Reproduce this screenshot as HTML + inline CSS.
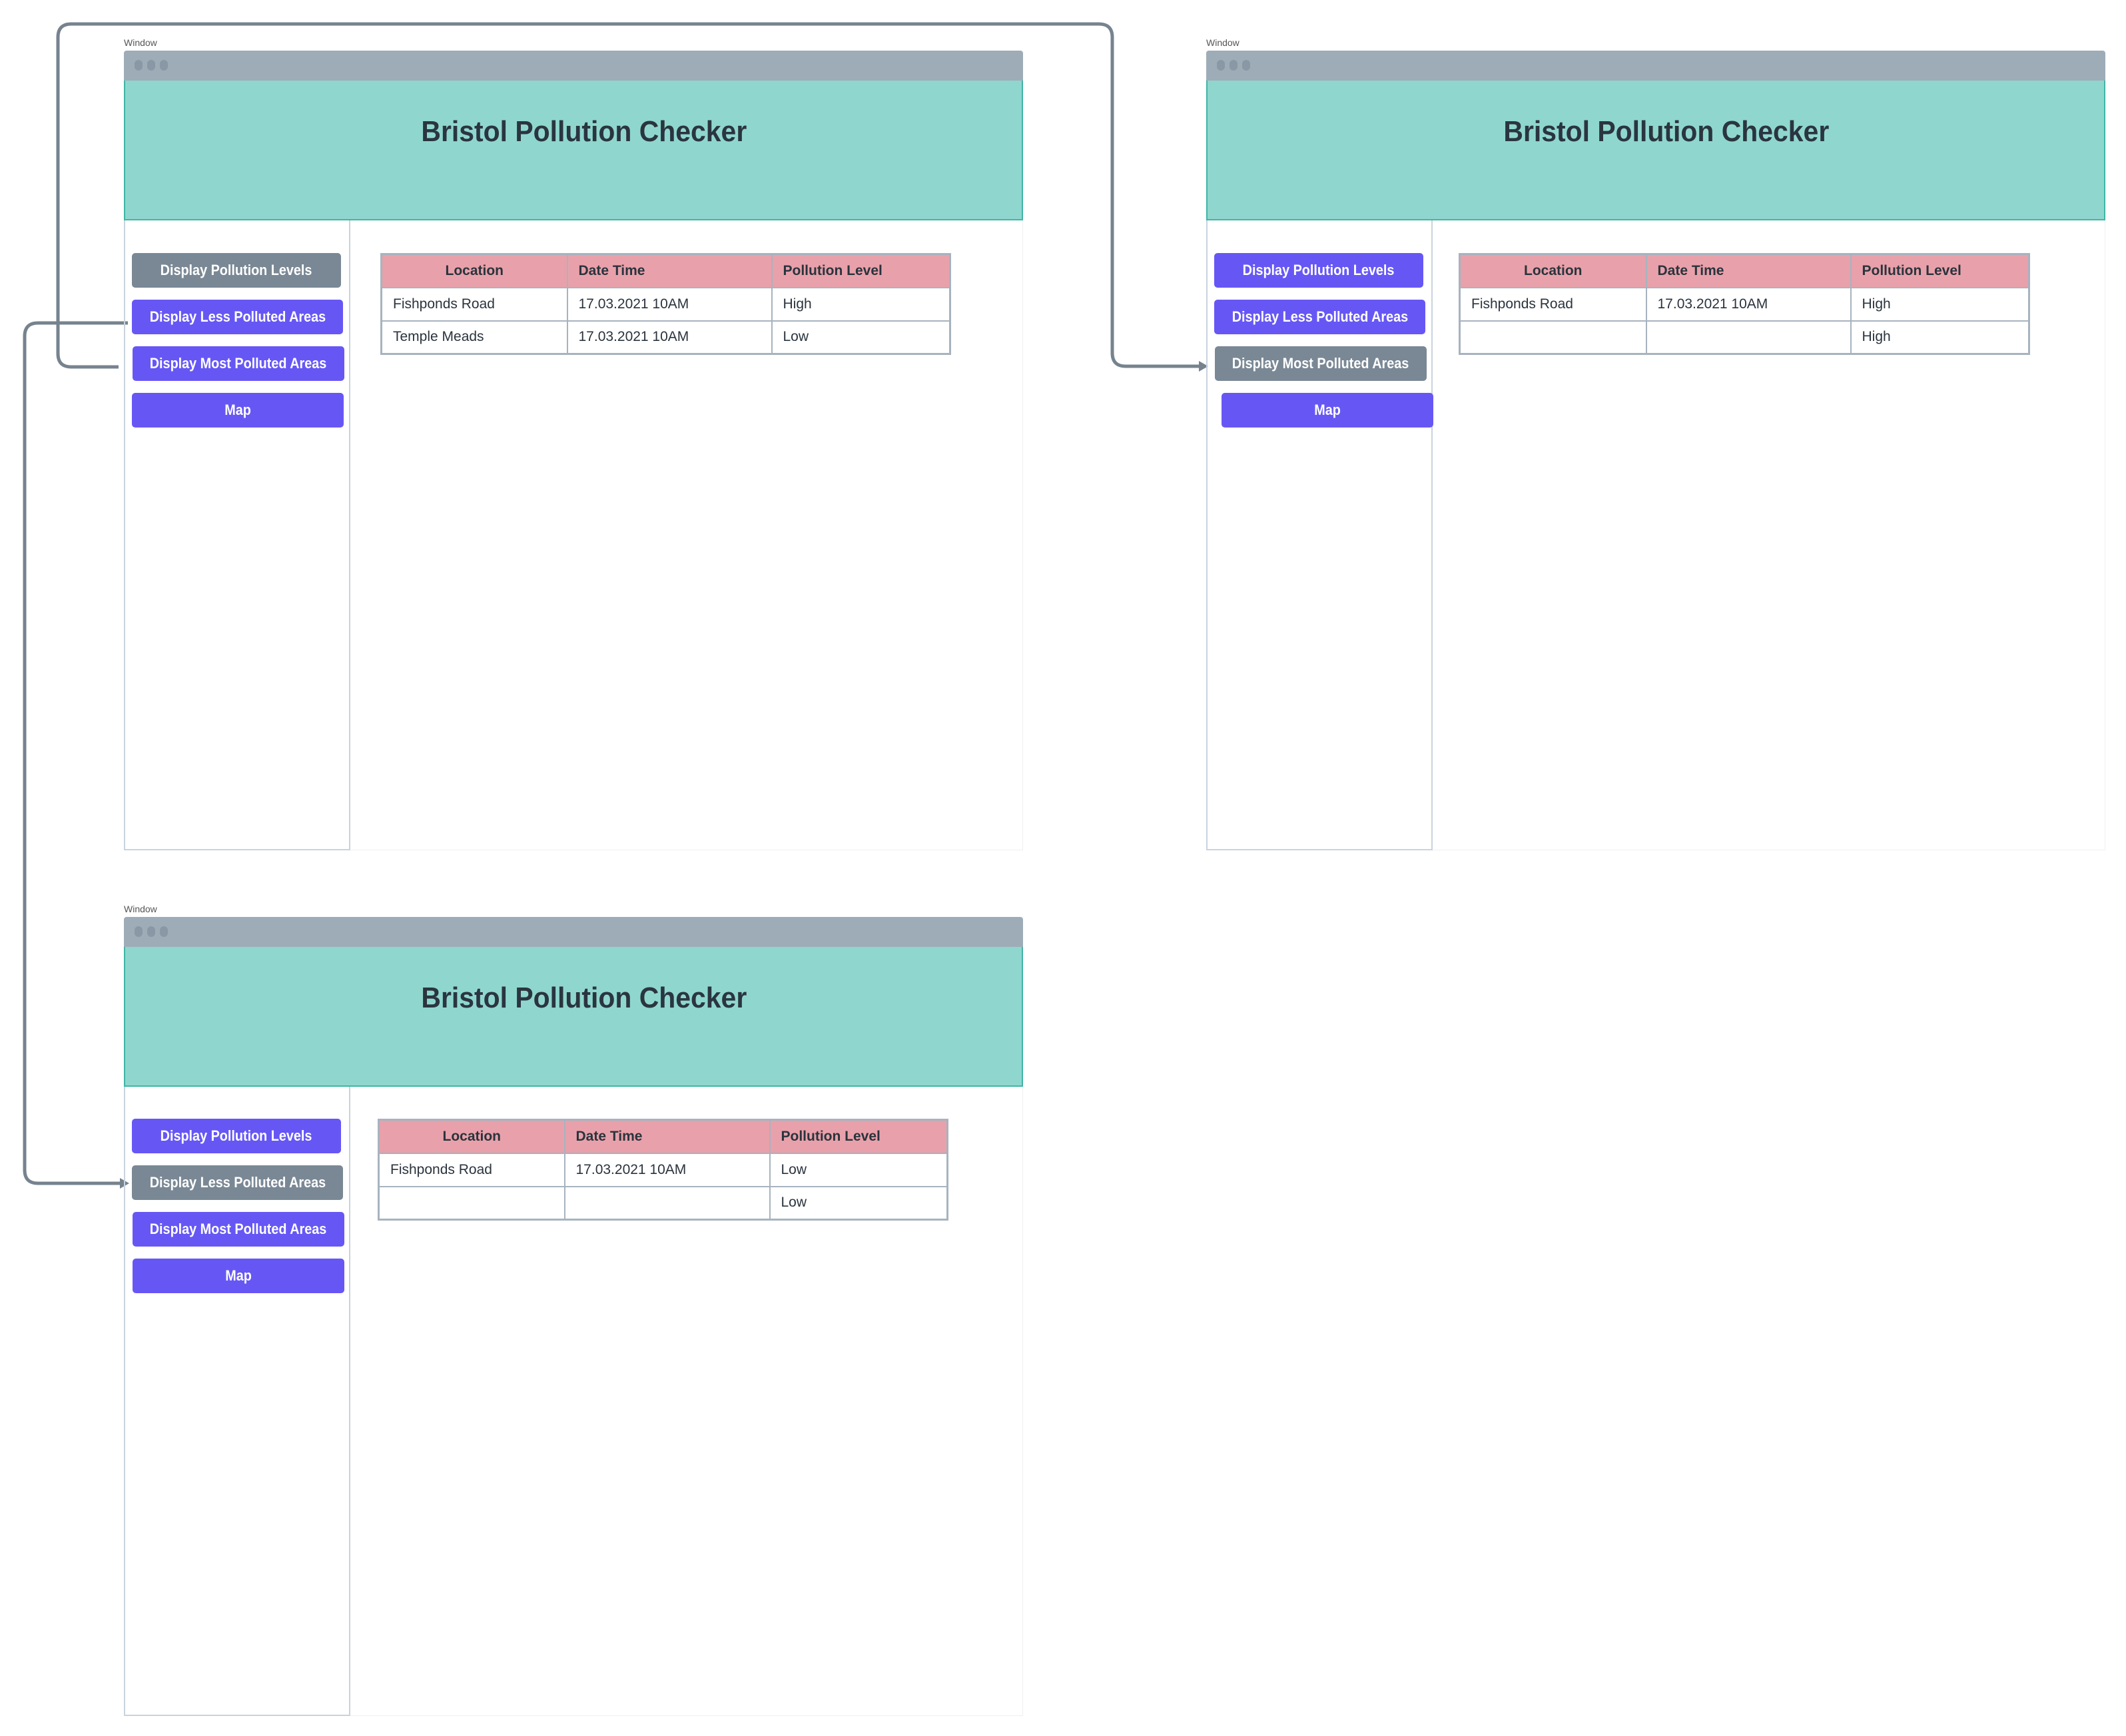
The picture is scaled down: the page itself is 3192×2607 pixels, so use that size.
<!DOCTYPE html>
<html><head><meta charset="utf-8"><style>
*{box-sizing:border-box;margin:0;padding:0}
body{width:3192px;height:2607px;background:#fff;position:relative;overflow:hidden;font-family:"Liberation Sans",sans-serif;color:#2a333d}
.win{position:absolute;width:1350px;height:1200px}
.lbl{position:absolute;left:0;top:-20px;font-size:14px;color:#555}
.bar{position:absolute;left:0;top:0;width:100%;height:46px;background:#9eacb8;border-radius:4px 4px 0 0}
.dot{position:absolute;top:14px;width:12px;height:16px;border-radius:6px;background:#8a97a4}
.hdr{position:absolute;left:0;top:45px;width:100%;height:210px;background:#8fd7ce;border:2px solid #3fb5a6;border-top:none}
.hdr h1{position:absolute;left:32px;right:0;top:52px;text-align:center;font-size:44px;font-weight:bold;color:#2a3540}
.hdr h1 span{display:inline-block;transform:scaleX(0.93)}
.side{position:absolute;left:0;top:255px;width:340px;bottom:0;border:2px solid #c9d3dd;border-top:none}
.main{position:absolute;left:340px;right:0;top:255px;bottom:0;border-right:1px solid #f0f0f0;border-bottom:1px solid #f0f0f0}
.btn{position:absolute;height:52px;border-radius:5px;background:#6657f5;color:#fff;font-size:22px;font-weight:bold;display:flex;align-items:center;justify-content:center;white-space:nowrap}
.btn span{display:inline-block;transform:scaleX(0.9)}
.btn.g{background:#7a8895}
table{position:absolute;border-collapse:collapse;font-size:21px;border:3px solid #a7b3bf}
td,th{border:2px solid #a7b3bf;height:50px;text-align:left;padding-left:16px}
th{background:#e8a1aa;font-weight:bold}
th:first-child{text-align:center;padding-left:0}
</style></head><body>

<svg style="position:absolute;left:0;top:0" width="3192" height="2607">
<path d="M178 551 H107 Q87 551 87 531 V56 Q87 36 107 36 H1650 Q1670 36 1670 56 V530 Q1670 550 1690 550 H1810" fill="none" stroke="#76838f" stroke-width="5"/>
<path d="M1800 542 L1814 550 L1800 558 Z" fill="#76838f"/>
<path d="M192 485 H57 Q37 485 37 505 V1757 Q37 1777 57 1777 H186" fill="none" stroke="#76838f" stroke-width="5"/>
<path d="M180 1769 L194 1777 L180 1785 Z" fill="#76838f"/>
</svg>

<!-- Window 1 -->
<div class="win" style="left:186px;top:76px;height:1201px">
<div class="lbl">Window</div>
<div class="bar"><div class="dot" style="left:16px"></div><div class="dot" style="left:35px"></div><div class="dot" style="left:54px"></div></div>
<div class="hdr"><h1><span>Bristol Pollution Checker</span></h1></div>
<div class="side"></div><div class="main"></div>
<div class="btn g" style="left:12px;top:304px;width:314px"><span>Display Pollution Levels</span></div>
<div class="btn" style="left:12px;top:374px;width:317px"><span>Display Less Polluted Areas</span></div>
<div class="btn" style="left:13px;top:444px;width:318px"><span>Display Most Polluted Areas</span></div>
<div class="btn" style="left:12px;top:514px;width:318px"><span>Map</span></div>
<table style="left:385px;top:304px;width:857px">
<colgroup><col style="width:279px"><col style="width:307px"><col></colgroup>
<tr><th>Location</th><th>Date Time</th><th>Pollution Level</th></tr>
<tr><td>Fishponds Road</td><td>17.03.2021 10AM</td><td>High</td></tr>
<tr><td>Temple Meads</td><td>17.03.2021 10AM</td><td>Low</td></tr>
</table>
</div>

<!-- Window 2 -->
<div class="win" style="left:1811px;top:76px;height:1201px">
<div class="lbl">Window</div>
<div class="bar"><div class="dot" style="left:16px"></div><div class="dot" style="left:35px"></div><div class="dot" style="left:54px"></div></div>
<div class="hdr"><h1><span>Bristol Pollution Checker</span></h1></div>
<div class="side"></div><div class="main"></div>
<div class="btn" style="left:12px;top:304px;width:314px"><span>Display Pollution Levels</span></div>
<div class="btn" style="left:12px;top:374px;width:317px"><span>Display Less Polluted Areas</span></div>
<div class="btn g" style="left:13px;top:444px;width:318px"><span>Display Most Polluted Areas</span></div>
<div class="btn" style="left:23px;top:514px;width:318px"><span>Map</span></div>
<table style="left:379px;top:304px;width:858px">
<colgroup><col style="width:280px"><col style="width:307px"><col></colgroup>
<tr><th>Location</th><th>Date Time</th><th>Pollution Level</th></tr>
<tr><td>Fishponds Road</td><td>17.03.2021 10AM</td><td>High</td></tr>
<tr><td></td><td></td><td>High</td></tr>
</table>
</div>

<!-- Window 3 -->
<div class="win" style="left:186px;top:1377px;height:1200px">
<div class="lbl">Window</div>
<div class="bar"><div class="dot" style="left:16px"></div><div class="dot" style="left:35px"></div><div class="dot" style="left:54px"></div></div>
<div class="hdr"><h1><span>Bristol Pollution Checker</span></h1></div>
<div class="side"></div><div class="main"></div>
<div class="btn" style="left:12px;top:303px;width:314px"><span>Display Pollution Levels</span></div>
<div class="btn g" style="left:12px;top:373px;width:317px"><span>Display Less Polluted Areas</span></div>
<div class="btn" style="left:13px;top:443px;width:318px"><span>Display Most Polluted Areas</span></div>
<div class="btn" style="left:13px;top:513px;width:318px"><span>Map</span></div>
<table style="left:381px;top:303px;width:857px">
<colgroup><col style="width:279px"><col style="width:308px"><col></colgroup>
<tr><th>Location</th><th>Date Time</th><th>Pollution Level</th></tr>
<tr><td>Fishponds Road</td><td>17.03.2021 10AM</td><td>Low</td></tr>
<tr><td></td><td></td><td>Low</td></tr>
</table>
</div>

</body></html>
